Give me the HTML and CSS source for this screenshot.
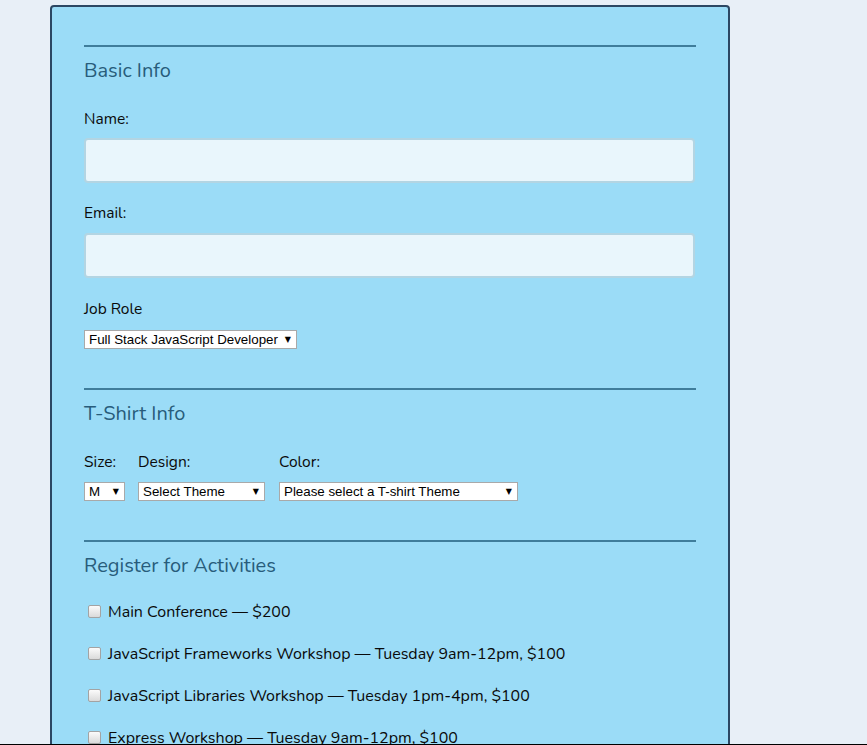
FILE: index.html
```html
<!DOCTYPE html>
<html lang="en">
<head>
<meta charset="utf-8">
<title>Registration</title>
<link rel="stylesheet" href="styles.css">
</head>
<body>
<div class="card">
  <div class="section">
    <h2 class="heading">Basic Info</h2>
    <div class="label label-first">Name:</div>
    <div class="text-input text-input-name"></div>
    <div class="label label-email">Email:</div>
    <div class="text-input text-input-email"></div>
    <div class="label label-job">Job Role</div>
    <div class="select select-job"><span class="select-text">Full Stack JavaScript Developer</span><span class="arrow">▼</span></div>
  </div>
  <div class="section section-tshirt">
    <h2 class="heading">T-Shirt Info</h2>
    <div class="tshirt-row">
      <div class="tshirt-col">
        <div class="label label-first">Size:</div>
        <div class="select select-size"><span class="select-text">M</span><span class="arrow">▼</span></div>
      </div>
      <div class="tshirt-col">
        <div class="label label-first">Design:</div>
        <div class="select select-design"><span class="select-text">Select Theme</span><span class="arrow">▼</span></div>
      </div>
      <div class="tshirt-col tshirt-col-color">
        <div class="label label-first">Color:</div>
        <div class="select select-color"><span class="select-text">Please select a T-shirt Theme</span><span class="arrow">▼</span></div>
      </div>
    </div>
  </div>
  <div class="section section-activities">
    <h2 class="heading">Register for Activities</h2>
    <div class="activities">
      <label class="activity"><span class="checkbox"></span>Main Conference — $200</label>
      <label class="activity"><span class="checkbox"></span>JavaScript Frameworks Workshop — Tuesday 9am-12pm, $100</label>
      <label class="activity"><span class="checkbox"></span>JavaScript Libraries Workshop — Tuesday 1pm-4pm, $100</label>
      <label class="activity"><span class="checkbox"></span>Express Workshop — Tuesday 9am-12pm, $100</label>
      <label class="activity"><span class="checkbox"></span>Node.js Workshop — Tuesday 1pm-4pm, $100</label>
    </div>
  </div>
</div>
<div class="bottom-edge"></div>
</body>
</html>
```
FILE: styles.css
```css
html, body {
  margin: 0;
  padding: 0;
}
body {
  background: #e8eff7;
  font-family: "Nunito", "Lato", "Open Sans", sans-serif;
  color: #000;
  overflow: hidden;
  height: 745px;
}
.card {
  box-sizing: border-box;
  margin: 5px 0 0 50px;
  width: 680px;
  min-height: 900px;
  background: #9bdcf7;
  border: 2px solid #2c4763;
  border-radius: 4px;
  padding: 38px 32px 0 32px;
}
.section {
  border-top: 2px solid #3f7d9b;
  padding-top: 12px;
}
.section-tshirt {
  margin-top: 39px;
}
.section-activities {
  margin-top: 39px;
}
.heading {
  margin: 0;
  font-size: 20px;
  line-height: 24px;
  font-weight: 400;
  color: #285c7b;
}
.label {
  font-size: 15.5px;
  line-height: 20px;
  margin-top: 19px;
  color: #0a0a0a;
}
.label-first {
  margin-top: 26px;
}
.label-email {
  margin-top: 20px;
}
.label-job {
  margin-top: 21px;
}
.text-input {
  box-sizing: border-box;
  margin-top: 9px;
  height: 45px;
  width: 611px;
  background: #e9f6fc;
  border: 2px solid #b3d5e3;
  border-radius: 4px;
}
.text-input-email {
  margin-top: 10px;
}
.select {
  box-sizing: border-box;
  display: flex;
  align-items: center;
  justify-content: space-between;
  height: 19px;
  background: #fff;
  border: 1px solid #a9a9a9;
  padding: 0 5px 0 4px;
  font-family: "Liberation Sans", Arial, sans-serif;
  font-size: 13.33px;
  color: #000;
  white-space: nowrap;
}
.select-job {
  margin-top: 11px;
  width: 213px;
}
.arrow {
  font-family: "DejaVu Sans", sans-serif;
  font-size: 8px;
  line-height: 1;
  margin-left: 6px;
}
.tshirt-row {
  display: flex;
  gap: 13px;
}
.tshirt-col-color {
  margin-left: 1px;
}
.tshirt-col .select {
  margin-top: 10px;
}
.select-size {
  width: 41px;
}
.select-design {
  width: 127px;
}
.select-color {
  width: 239px;
}
.activities {
  display: flex;
  flex-direction: column;
  gap: 22px;
  margin-top: 24px;
}
.activity {
  display: flex;
  align-items: center;
  font-size: 16px;
  line-height: 20px;
  color: #0a0a0a;
}
.checkbox {
  box-sizing: border-box;
  width: 13px;
  height: 13px;
  margin: 0 7px 2px 4px;
  border: 1px solid #a3a3a3;
  border-radius: 2px;
  background: linear-gradient(#fbfbfb, #dadada);
}
.bottom-edge {
  position: fixed;
  left: 0;
  right: 0;
  bottom: 0;
  height: 1px;
  background: #000;
}
```
